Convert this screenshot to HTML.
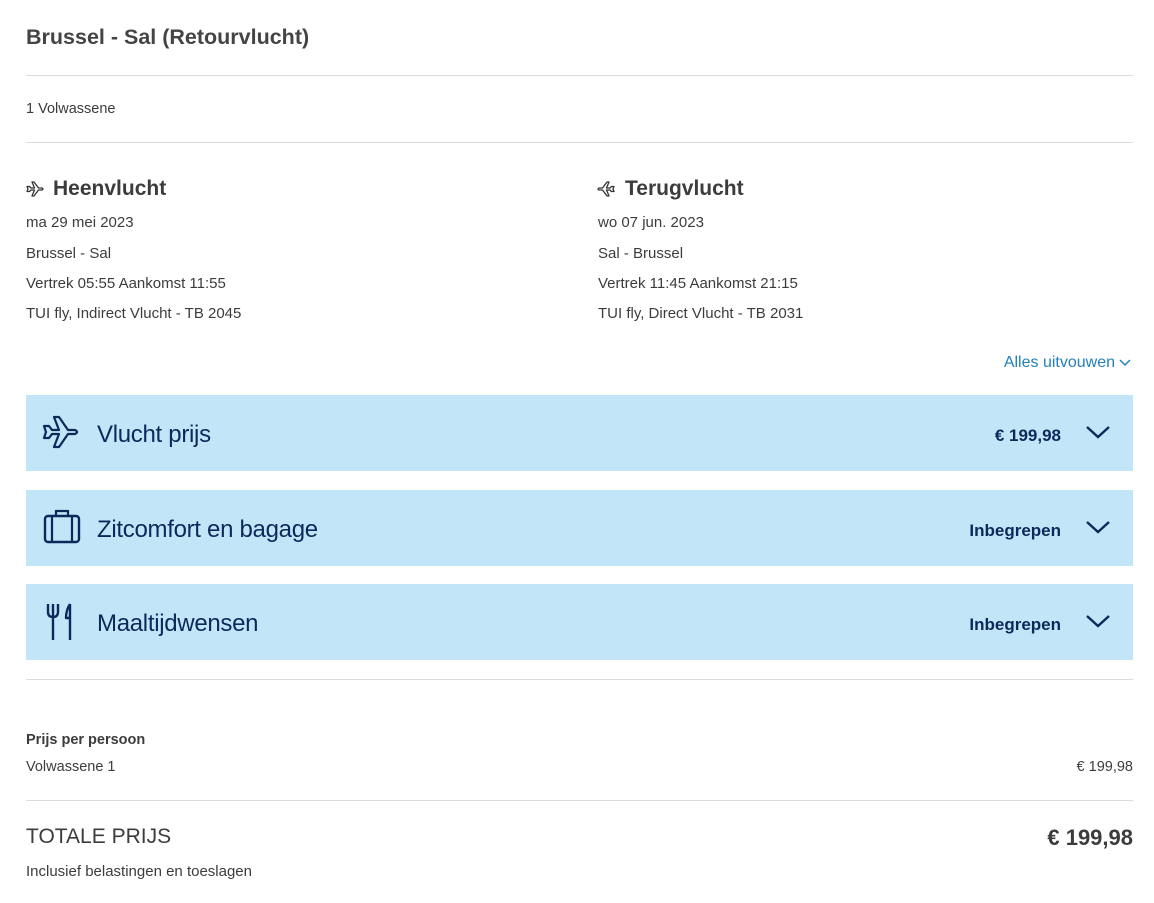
<!DOCTYPE html>
<html><head><meta charset="utf-8"><style>
*{margin:0;padding:0;box-sizing:border-box}
body{width:1154px;height:903px;background:#fff;font-family:"Liberation Sans",sans-serif;color:#3c3c3c;position:relative;overflow:hidden}
.a{position:absolute;white-space:nowrap}
.hr{position:absolute;left:26px;width:1107px;height:1px;background:#dcdcdc}
.s{font-size:15px;color:#3c3c3c}
.p{position:absolute;left:26px;width:1107px;height:76px;background:#c3e5f8;color:#0a2a5c}
.p .t{position:absolute;left:71px;top:26px;font-size:24px;letter-spacing:-0.3px}
.p .r{position:absolute;right:72px;top:31px;font-size:17px;font-weight:bold}
.p svg.ch{position:absolute;right:22px;top:29px}
.p svg.ic{position:absolute;left:16px}
</style></head><body>
<div class="a" style="left:26px;top:25px;font-size:21.5px;font-weight:bold;color:#444">Brussel - Sal (Retourvlucht)</div>
<div class="hr" style="top:75px"></div>
<div class="a s" style="left:26px;top:101px;font-size:14.5px">1 Volwassene</div>
<div class="hr" style="top:142px"></div>

<svg class="a" style="left:26px;top:180px" width="18" height="18" viewBox="0 0 18 18"><path d="M1 6.5h2.5L5 8h3.5L6 2h2l4.5 6h3.5q2 1 0 2H12.5L8 16H6l2.5-6H5l-1.5 1.5H1l1-2.5z" fill="none" stroke="#333" stroke-width="1.3" stroke-linejoin="round"/></svg>
<div class="a" style="left:53px;top:177px;font-size:21px;font-weight:bold">Heenvlucht</div>
<div class="a s" style="left:26px;top:214px">ma 29 mei 2023</div>
<div class="a s" style="left:26px;top:245px">Brussel - Sal</div>
<div class="a s" style="left:26px;top:275px">Vertrek 05:55 Aankomst 11:55</div>
<div class="a s" style="left:26px;top:305px">TUI fly, Indirect Vlucht - TB 2045</div>

<svg class="a" style="left:597px;top:180px" width="18" height="18" viewBox="0 0 18 18"><g transform="translate(18,0) scale(-1,1)"><path d="M1 6.5h2.5L5 8h3.5L6 2h2l4.5 6h3.5q2 1 0 2H12.5L8 16H6l2.5-6H5l-1.5 1.5H1l1-2.5z" fill="none" stroke="#333" stroke-width="1.3" stroke-linejoin="round"/></g></svg>
<div class="a" style="left:625px;top:177px;font-size:21px;font-weight:bold">Terugvlucht</div>
<div class="a s" style="left:598px;top:214px">wo 07 jun. 2023</div>
<div class="a s" style="left:598px;top:245px">Sal - Brussel</div>
<div class="a s" style="left:598px;top:275px">Vertrek 11:45 Aankomst 21:15</div>
<div class="a s" style="left:598px;top:305px">TUI fly, Direct Vlucht - TB 2031</div>

<div class="a" style="right:39px;top:354px;font-size:16px;color:#2480b8">Alles uitvouwen</div>
<svg class="a" style="left:1119px;top:357px" width="12" height="10" viewBox="0 0 12 10"><path d="M1 3l5 5 5-5" fill="none" stroke="#2480b8" stroke-width="1.5"/></svg>

<div class="p" style="top:395px">
<svg class="ic" style="top:19px" width="38" height="38" viewBox="0 0 38 38"><path d="M2 12h5l3 4h7L12 3h5l9 13h7q4 2 0 4h-7l-9 13h-5l5-13h-7l-3 4H2l2-6z" fill="none" stroke="#0a2a5c" stroke-width="2.2" stroke-linejoin="round"/></svg>
<div class="t">Vlucht prijs</div><div class="r">€ 199,98</div>
<svg class="ch" width="26" height="16" viewBox="0 0 26 16"><path d="M2 3l11 10L24 3" fill="none" stroke="#0a2a5c" stroke-width="2.4"/></svg></div>

<div class="p" style="top:490px">
<svg class="ic" style="top:18px;left:17px" width="38" height="38" viewBox="0 0 38 38"><rect x="2" y="8" width="34" height="26" rx="3" fill="none" stroke="#0a2a5c" stroke-width="2.4"/><path d="M9 8v26M29 8v26M13 8V3h12v5" fill="none" stroke="#0a2a5c" stroke-width="2.2"/></svg>
<div class="t">Zitcomfort en bagage</div><div class="r">Inbegrepen</div>
<svg class="ch" width="26" height="16" viewBox="0 0 26 16"><path d="M2 3l11 10L24 3" fill="none" stroke="#0a2a5c" stroke-width="2.4"/></svg></div>

<div class="p" style="top:584px">
<svg class="ic" style="top:18px;left:20px" width="34" height="40" viewBox="0 0 34 40"><path d="M2 2v8q0 5 5 5t5-5V2M7 2v36M24 2q-4 6-4 14h4v22M24 2v14" fill="none" stroke="#0a2a5c" stroke-width="2.4" stroke-linejoin="round"/></svg>
<div class="t">Maaltijdwensen</div><div class="r">Inbegrepen</div>
<svg class="ch" width="26" height="16" viewBox="0 0 26 16"><path d="M2 3l11 10L24 3" fill="none" stroke="#0a2a5c" stroke-width="2.4"/></svg></div>

<div class="hr" style="top:679px"></div>
<div class="a" style="left:26px;top:732px;font-size:14.5px;font-weight:bold">Prijs per persoon</div>
<div class="a s" style="left:26px;top:759px;font-size:14.5px">Volwassene 1</div>
<div class="a s" style="right:21px;top:759px;font-size:14.5px">€ 199,98</div>
<div class="hr" style="top:800px"></div>
<div class="a" style="left:26px;top:825px;font-size:21px">TOTALE PRIJS</div>
<div class="a" style="right:21px;top:825px;font-size:22px;font-weight:bold">€ 199,98</div>
<div class="a s" style="left:26px;top:863px">Inclusief belastingen en toeslagen</div>
</body></html>
